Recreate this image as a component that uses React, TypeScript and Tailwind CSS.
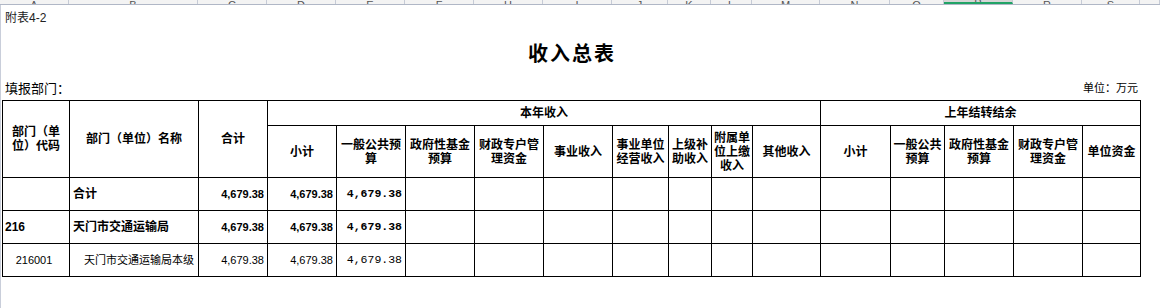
import React from "react";

const letterCols: { w: number; l: string; sel?: boolean }[] = [
  { w: 69, l: "A" },
  { w: 129, l: "B" },
  { w: 69, l: "C" },
  { w: 69, l: "D" },
  { w: 69, l: "E" },
  { w: 69, l: "F" },
  { w: 69, l: "H" },
  { w: 69, l: "I" },
  { w: 56, l: "J" },
  { w: 43, l: "K" },
  { w: 41, l: "L" },
  { w: 68, l: "M" },
  { w: 70, l: "N" },
  { w: 54, l: "O" },
  { w: 69, l: "P", sel: true },
  { w: 69, l: "R" },
  { w: 58, l: "S" },
  { w: 20, l: "" },
];

const colWidths = [67, 129, 69, 69, 69, 69, 69, 69, 56, 43, 41, 68, 70, 54, 69, 69, 58];

const th = "border border-black p-0 text-center align-middle font-bold text-[12px] leading-[14px]";
const td = "border border-black p-0 align-middle";

function HeadCell({
  children,
  rowSpan,
  colSpan,
}: {
  children: React.ReactNode;
  rowSpan?: number;
  colSpan?: number;
}) {
  return (
    <td rowSpan={rowSpan} colSpan={colSpan} className={th}>
      {children}
    </td>
  );
}

function Num({ v, bold, mono }: { v: string; bold?: boolean; mono?: boolean }) {
  return (
    <td
      className={
        td +
        " text-right pr-[3px] " +
        (mono
          ? "[font-family:'Liberation_Mono',monospace] text-[11.5px] "
          : "[font-family:'Liberation_Sans',sans-serif] text-[11px] ") +
        (bold ? "font-bold" : "font-normal")
      }
    >
      {v}
    </td>
  );
}

function Empty({ n }: { n: number }) {
  return (
    <>
      {Array.from({ length: n }).map((_, i) => (
        <td key={i} className={td}></td>
      ))}
    </>
  );
}

export default function App() {
  return (
    <div className="w-[1160px] h-[308px] bg-white overflow-hidden text-black [font-family:'Liberation_Sans','Noto_Sans_CJK_SC',sans-serif]">
      {/* spreadsheet column header strip */}
      <div className="flex h-[5px] bg-[#f3f3f3] border-b border-[#b0b7c6]">
        {letterCols.map((c, i) => (
          <div
            key={i}
            style={{ width: c.w }}
            className={
              "shrink-0 h-full overflow-hidden flex justify-center items-end border-r border-[#c6cbd6] " +
              (c.sel ? "bg-[#d6d6d6] border-b-2 border-b-[#21a366]" : "")
            }
          >
            <span className="text-[11px] leading-[11px] mb-[-7px] text-[#555]">{c.l}</span>
          </div>
        ))}
      </div>

      <div className="border-l border-[#c9ceda] h-[303px] pl-[1px]">
        <div className="h-[26px] flex items-center pl-[3px] text-[12px] text-[#222]">附表4-2</div>
        <div className="h-[46px] w-[1138px] flex items-center justify-center">
          <span className="text-[20px] font-bold tracking-[2px] pl-[2px]">收入总表</span>
        </div>
        <div className="h-[23px] w-[1138px] flex items-center justify-between pl-[3px] pr-[2px]">
          <span className="text-[13px]">填报部门：</span>
          <span className="text-[11px]">单位：万元</span>
        </div>

        <table className="border-collapse table-fixed w-[1139px]">
          <colgroup>
            {colWidths.map((w, i) => (
              <col key={i} style={{ width: w }} />
            ))}
          </colgroup>
          <tbody>
            <tr className="h-[25px]">
              <HeadCell rowSpan={2}>
                部门（单
                <br />
                位）代码
              </HeadCell>
              <HeadCell rowSpan={2}>部门（单位）名称</HeadCell>
              <HeadCell rowSpan={2}>合计</HeadCell>
              <HeadCell colSpan={9}>本年收入</HeadCell>
              <HeadCell colSpan={5}>上年结转结余</HeadCell>
            </tr>
            <tr className="h-[52px]">
              <HeadCell>小计</HeadCell>
              <HeadCell>
                一般公共预
                <br />
                算
              </HeadCell>
              <HeadCell>
                政府性基金
                <br />
                预算
              </HeadCell>
              <HeadCell>
                财政专户管
                <br />
                理资金
              </HeadCell>
              <HeadCell>事业收入</HeadCell>
              <HeadCell>
                事业单位
                <br />
                经营收入
              </HeadCell>
              <HeadCell>
                上级补
                <br />
                助收入
              </HeadCell>
              <HeadCell>
                附属单
                <br />
                位上缴
                <br />
                收入
              </HeadCell>
              <HeadCell>其他收入</HeadCell>
              <HeadCell>小计</HeadCell>
              <HeadCell>
                一般公共
                <br />
                预算
              </HeadCell>
              <HeadCell>
                政府性基金
                <br />
                预算
              </HeadCell>
              <HeadCell>
                财政专户管
                <br />
                理资金
              </HeadCell>
              <HeadCell>单位资金</HeadCell>
            </tr>
            <tr className="h-[33px]">
              <td className={td}></td>
              <td className={td + " text-left pl-[3px] font-bold text-[12px]"}>合计</td>
              <Num v="4,679.38" bold />
              <Num v="4,679.38" bold />
              <Num v="4,679.38" bold mono />
              <Empty n={12} />
            </tr>
            <tr className="h-[33px]">
              <td className={td + " text-left pl-[2px] font-bold text-[12px]"}>216</td>
              <td className={td + " text-left pl-[3px] font-bold text-[12px]"}>天门市交通运输局</td>
              <Num v="4,679.38" bold />
              <Num v="4,679.38" bold />
              <Num v="4,679.38" bold mono />
              <Empty n={12} />
            </tr>
            <tr className="h-[33px]">
              <td className={td + " text-center pr-[4px] text-[11px]"}>216001</td>
              <td className={td + " text-right pr-[4px] text-[11px]"}>天门市交通运输局本级</td>
              <Num v="4,679.38" />
              <Num v="4,679.38" />
              <Num v="4,679.38" mono />
              <Empty n={12} />
            </tr>
          </tbody>
        </table>
      </div>
    </div>
  );
}
